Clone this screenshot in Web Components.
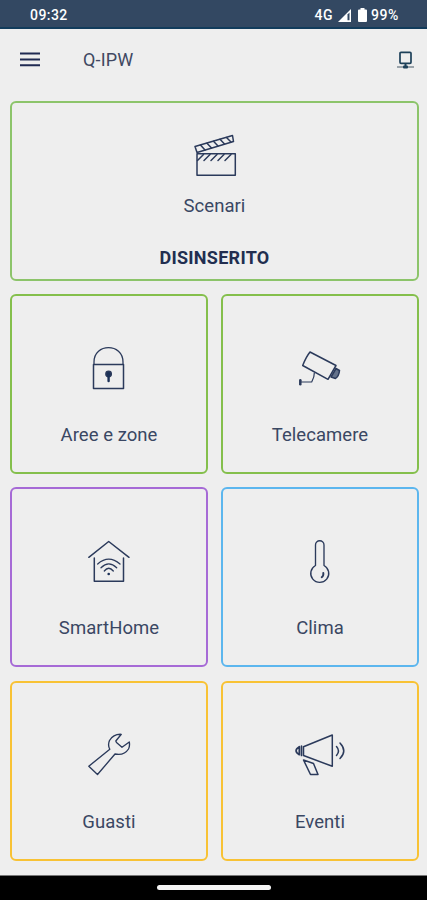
<!DOCTYPE html>
<html lang="it">
<head>
<meta charset="utf-8">
<title>Q-IPW</title>
<style>
html,body{margin:0;height:100%;background:#eee}
body{font-family:Roboto,"Liberation Sans",sans-serif;color:#253350}
</style>
</head>
<body>
<panel-app></panel-app>
<script>
const define = (name, html) => {
  const t = document.createElement('template');
  t.innerHTML = html;
  customElements.define(name, class extends HTMLElement {
    constructor() {
      super();
      this.attachShadow({mode: 'open'}).append(t.content.cloneNode(true));
    }
  });
};

define('status-bar', `
<style>
:host{display:flex;align-items:center;box-sizing:border-box;height:29px;padding:3px 28px 0 30px;background:#334862;border-bottom:2px solid #123c5c;color:#fff;font:500 14px/20px Roboto,sans-serif;letter-spacing:.45px}
.sp{flex:1}
svg{display:block}
.sig{margin:0 7px 0 5px}.bat{margin:0 4px 0 0}
.pct{letter-spacing:.6px}
</style>
<span>09:32</span><span class="sp"></span><span>4G</span>
<svg class="sig" width="13" height="13" viewBox="0 0 13 13"><path d="M0 13L13 0V13Z" fill="#fff"/><path d="M9.500 5.500L11.500 3.600V11.300H9.500Z" fill="#334862"/></svg>
<svg class="bat" width="9" height="14" viewBox="0 0 9 14"><path d="M2.500 0h4v1.500H8a1 1 0 0 1 1 1V13a1 1 0 0 1-1 1H1a1 1 0 0 1-1-1V2.500a1 1 0 0 1 1-1h1.500z" fill="#fff"/></svg>
<span class="pct">99%</span>`);

define('app-header', `
<style>
:host{display:flex;align-items:center;height:62px;padding:0 13px 0 20px}
h1{margin:0 auto 0 43px;font:400 18px/24px Roboto,sans-serif;letter-spacing:.15px;color:#404862}
svg{display:block;fill:none}
</style>
<svg width="20" height="16" viewBox="0 0 20 16"><path d="M0 1.500H20M0 7.500H20M0 13.300H20" stroke="#1f2a52" stroke-width="1.900"/></svg>
<h1><slot></slot></h1>
<svg width="18" height="20" viewBox="0 0 18 20"><path d="M1 17H18" stroke="#8c969f" stroke-width="1.700"/><rect x="4" y="2.300" width="11" height="11" rx="1" stroke="#1d4059" stroke-width="1.700"/><path d="M9.500 14v3" stroke="#1d4059" stroke-width="2"/><rect x="7" y="15.600" width="5" height="3" rx="1" fill="#1d4059"/></svg>`);

define('panel-tile', `
<style>
:host{display:flex;flex-direction:column;align-items:center;box-sizing:border-box;border:2px solid var(--edge);border-radius:6px;padding-top:43px;background:#eee}
:host([wide]){grid-column:1/-1;padding-top:22px}
::slotted(svg){display:block;flex:none;width:60px;height:60px;fill:none;stroke:#2b3a5b;stroke-width:1.500;stroke-linejoin:round;stroke-linecap:round}
.name{flex:none;margin-top:24px;font:400 18.500px/24px Roboto,sans-serif;letter-spacing:.05px;color:#3a4763}
:host([wide]) .name{margin-top:9px}
.state{display:none;flex:none;margin-top:28px;font:700 18px/24px Roboto,sans-serif;letter-spacing:.27px;color:#222e50}
:host([wide]) .state{display:block}
</style>
<slot name="icon"></slot><div class="name"><slot></slot></div><div class="state"><slot name="state"></slot></div>`);

define('nav-bar', `
<style>
:host{display:flex;justify-content:center;box-sizing:border-box;height:25px;padding-top:9px;background:#000;border-top:1px solid #777}
i{width:114px;height:5px;border-radius:3px;background:#f5f5f5}
</style><i></i>`);

define('panel-app', `
<style>
:host{display:flex;flex-direction:column;height:900px;overflow:hidden}
main{flex:1;display:grid;grid-template-columns:1fr 1fr;grid-auto-rows:180px;gap:13.200px 13px;padding:10px 8px 0 10px}
</style>
<status-bar></status-bar>
<app-header>Q-IPW</app-header>
<main>
<panel-tile wide style="--edge:#8cc46a">
<svg slot="icon" viewBox="0 0 60 60"><path d="M12 28.700H50.300V50.300H12Z"/><path d="M10 21.500L47.500 10.500L48.500 16.500L12 27.500Z"/><path d="M15.500 20L20 25M22 18.200L26.500 23M28.500 16.200L33 21M35 14.300L39.500 19M41.500 12.500L46 17M12.500 35.500L18.500 29.500M19 35.500L25 29.500M26 35.500L32 29.500M33 35.500L39 29.500M40 35.500L46 29.500"/></svg>
Scenari<span slot="state">DISINSERITO</span></panel-tile>
<panel-tile style="--edge:#84bf4c">
<svg slot="icon" viewBox="0 0 60 60"><path d="M14.500 25.500H44.500V49.500H14.500Z"/><path d="M15 25V23C15 3.800 44 3.800 44 23V25" stroke-width="1.300"/><circle cx="29.600" cy="35" r="2.700" fill="#1c3158"/><path d="M29.600 36V42" stroke="#1c3158" stroke-width="2.400"/></svg>
Aree e zone</panel-tile>
<panel-tile style="--edge:#84bf4c">
<svg slot="icon" viewBox="0 0 60 60"><path d="M20 13L46 26.500L38 40.300L12.700 26.500Q16 18 20 13Z"/><path d="M46 29.500L49.500 31.500Q49 37 45.500 39.500L41 38Z" fill="#64728b"/><path d="M24.300 34Q24.500 38 21.700 43H11" stroke-width="1.200"/><path d="M10.300 41.300V45.300" stroke-width="2.500"/></svg>
Telecamere</panel-tile>
<panel-tile style="--edge:#a66ad6">
<svg slot="icon" viewBox="0 0 60 60"><path d="M9.800 25.300L29.700 9.500L50 25.300M15.300 26V49.300H44.500V26"/><g stroke-width="1.300"><path d="M18.700 32Q29.700 22.300 41 32M22 35.700Q29.700 28 37.700 35.700M25.300 39Q29.700 33.500 34.300 39"/></g><circle cx="29.700" cy="42" r="1.300" fill="#1c3158" stroke="none"/></svg>
SmartHome</panel-tile>
<panel-tile style="--edge:#5cb6ee">
<svg slot="icon" viewBox="0 0 60 60"><path d="M25.500 33.500V13A4.200 4.200 0 0 1 34 13V33.500A9 9 0 1 1 25.500 33.500Z" stroke-width="1.350"/><path d="M33.300 41Q33.800 43.800 31.700 45.300" stroke-width="1.900"/></svg>
Clima</panel-tile>
<panel-tile style="--edge:#f8c234">
<svg slot="icon" viewBox="0 0 60 60"><path d="M42.300 8.300L36.800 15L37.500 16.500L43 21.300L50.300 16Q51 20 49.500 23Q45 30 36 28L18.500 48.500L9.800 40.200L30.800 23.300Q28.500 19 30.500 14.500Q34.500 7.800 42.300 8.300Z" stroke-width="1.350"/></svg>
Guasti</panel-tile>
<panel-tile style="--edge:#f8c234">
<svg slot="icon" viewBox="0 0 60 60"><path d="M13.500 20.700L42.300 9V40.300L13.500 29.500Z"/><path d="M9.300 20.700Q2.800 24.700 9.300 28.700ZM11.500 20V29.500" stroke-width="1.700"/><path d="M13.500 34L20.500 48.500H28L23.500 37.500Z"/><path d="M46.500 20.500Q50.500 25 46.500 29.500M50 17Q57.500 25 50 32.500"/></svg>
Eventi</panel-tile>
</main>
<nav-bar></nav-bar>`);
</script>
</body>
</html>
